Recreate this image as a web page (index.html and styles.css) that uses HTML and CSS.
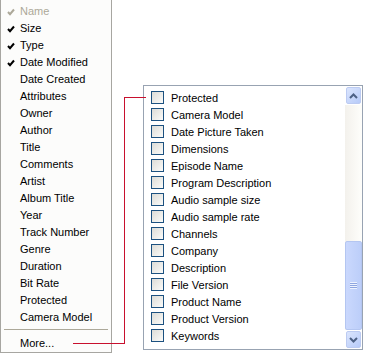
FILE: index.html
```html
<!DOCTYPE html>
<html lang="en">
<head>
  <meta charset="UTF-8">
  <title>Choose Details</title>
  <link rel="stylesheet" href="styles.css">
</head>
<body>

  <div class="stage">

    <!-- Column header context menu -->
    <ul class="menu">
      <li class="disabled"><svg class="tick" width="8" height="8" viewBox="0 0 8 8"><polyline points="1,4 3,6.2 7,1.5" fill="none" stroke="#aca899" stroke-width="2"/></svg>Name</li>
      <li><svg class="tick" width="8" height="8" viewBox="0 0 8 8"><polyline points="1,4 3,6.2 7,1.5" fill="none" stroke="#000" stroke-width="2"/></svg>Size</li>
      <li><svg class="tick" width="8" height="8" viewBox="0 0 8 8"><polyline points="1,4 3,6.2 7,1.5" fill="none" stroke="#000" stroke-width="2"/></svg>Type</li>
      <li><svg class="tick" width="8" height="8" viewBox="0 0 8 8"><polyline points="1,4 3,6.2 7,1.5" fill="none" stroke="#000" stroke-width="2"/></svg>Date Modified</li>
      <li>Date Created</li>
      <li>Attributes</li>
      <li>Owner</li>
      <li>Author</li>
      <li>Title</li>
      <li>Comments</li>
      <li>Artist</li>
      <li>Album Title</li>
      <li>Year</li>
      <li>Track Number</li>
      <li>Genre</li>
      <li>Duration</li>
      <li>Bit Rate</li>
      <li>Protected</li>
      <li>Camera Model</li>
      <li class="sep"></li>
      <li>More...</li>
    </ul>

    <!-- Details list -->
    <div class="listbox">
      <ul class="items">
        <li><span class="box"></span>Protected</li>
        <li><span class="box"></span>Camera Model</li>
        <li><span class="box"></span>Date Picture Taken</li>
        <li><span class="box"></span>Dimensions</li>
        <li><span class="box"></span>Episode Name</li>
        <li><span class="box"></span>Program Description</li>
        <li><span class="box"></span>Audio sample size</li>
        <li><span class="box"></span>Audio sample rate</li>
        <li><span class="box"></span>Channels</li>
        <li><span class="box"></span>Company</li>
        <li><span class="box"></span>Description</li>
        <li><span class="box"></span>File Version</li>
        <li><span class="box"></span>Product Name</li>
        <li><span class="box"></span>Product Version</li>
        <li><span class="box"></span>Keywords</li>
      </ul>
      <div class="scrollbar">
        <div class="sb-btn">
          <svg width="9" height="6" viewBox="0 0 9 6"><path d="M1 5 L4.5 1.5 L8 5" fill="none" stroke="#4d6185" stroke-width="2"/></svg>
        </div>
        <div class="sb-track">
          <div class="sb-thumb"><span class="grip"></span></div>
        </div>
        <div class="sb-btn">
          <svg width="9" height="6" viewBox="0 0 9 6"><path d="M1 1 L4.5 4.5 L8 1" fill="none" stroke="#4d6185" stroke-width="2"/></svg>
        </div>
      </div>
    </div>

    <!-- connector from "More..." to the list -->
    <svg class="connector" width="366" height="359">
      <path d="M73 343h51V97h22" fill="none" stroke="#c8102e" stroke-width="1" shape-rendering="crispEdges"/>
    </svg>

  </div>

</body>
</html>
```

FILE: styles.css
```css
body {
  margin: 0;
  background: #fff;
  font-family: Tahoma, "Liberation Sans", Arial, sans-serif;
  font-size: 11px;
  color: #000;
}
.stage {
  position: relative;
  display: flex;
  align-items: flex-start;
  gap: 31px;
  width: 366px;
  height: 359px;
}
ul {
  list-style: none;
  margin: 0;
  padding: 0;
}
.menu {
  width: 110px;
  padding-top: 3px;
  background: #fcfcfb;
  border: 1px solid #a7a6a1;
  border-top: none;
}
.menu li {
  position: relative;
  height: 17px;
  line-height: 17px;
  padding-left: 19px;
  white-space: nowrap;
}
.menu li.disabled {
  color: #aca899;
}
.menu .tick {
  position: absolute;
  left: 6px;
  top: 5px;
}
.menu li.sep {
  height: 1px;
  margin: 3px 3px 5px;
  padding: 0;
  background: #aca899;
}
.listbox {
  display: flex;
  margin-top: 85px;
  width: 218px;
  height: 263px;
  background: #fff;
  border: 1px solid #98a3b2;
}
.items {
  flex: 1;
  padding-top: 3px;
  overflow: hidden;
}
.items li {
  display: flex;
  align-items: center;
  height: 17px;
  padding-left: 7px;
  white-space: nowrap;
}
.box {
  width: 11px;
  height: 11px;
  margin-right: 7px;
  border: 1px solid #1c5180;
  background: linear-gradient(135deg, #dcdcd7, #fbfbf9);
}
.scrollbar {
  display: flex;
  flex-direction: column;
  width: 17px;
}
.sb-btn {
  display: flex;
  align-items: center;
  justify-content: center;
  height: 15px;
  margin: 1px;
  border: 1px solid #bccbf2;
  border-radius: 2px;
  background: linear-gradient(135deg, #dbe5fd, #b7cbf9);
}
.sb-btn svg {
  display: block;
}
.sb-track {
  flex: 1;
  display: flex;
  flex-direction: column;
  justify-content: flex-end;
  background: linear-gradient(90deg, #f3f1ec, #fefefb);
}
.sb-thumb {
  display: flex;
  align-items: center;
  justify-content: center;
  height: 87px;
  border: 1px solid #b4c6f1;
  border-radius: 2px;
  background: linear-gradient(90deg, #cad8fd, #bccef9);
}
.grip {
  width: 7px;
  height: 7px;
  background: repeating-linear-gradient(180deg, #eef3fe 0 1px, #8fa6e0 1px 2px);
}
.connector {
  position: absolute;
  left: 0;
  top: 0;
  pointer-events: none;
}
```
